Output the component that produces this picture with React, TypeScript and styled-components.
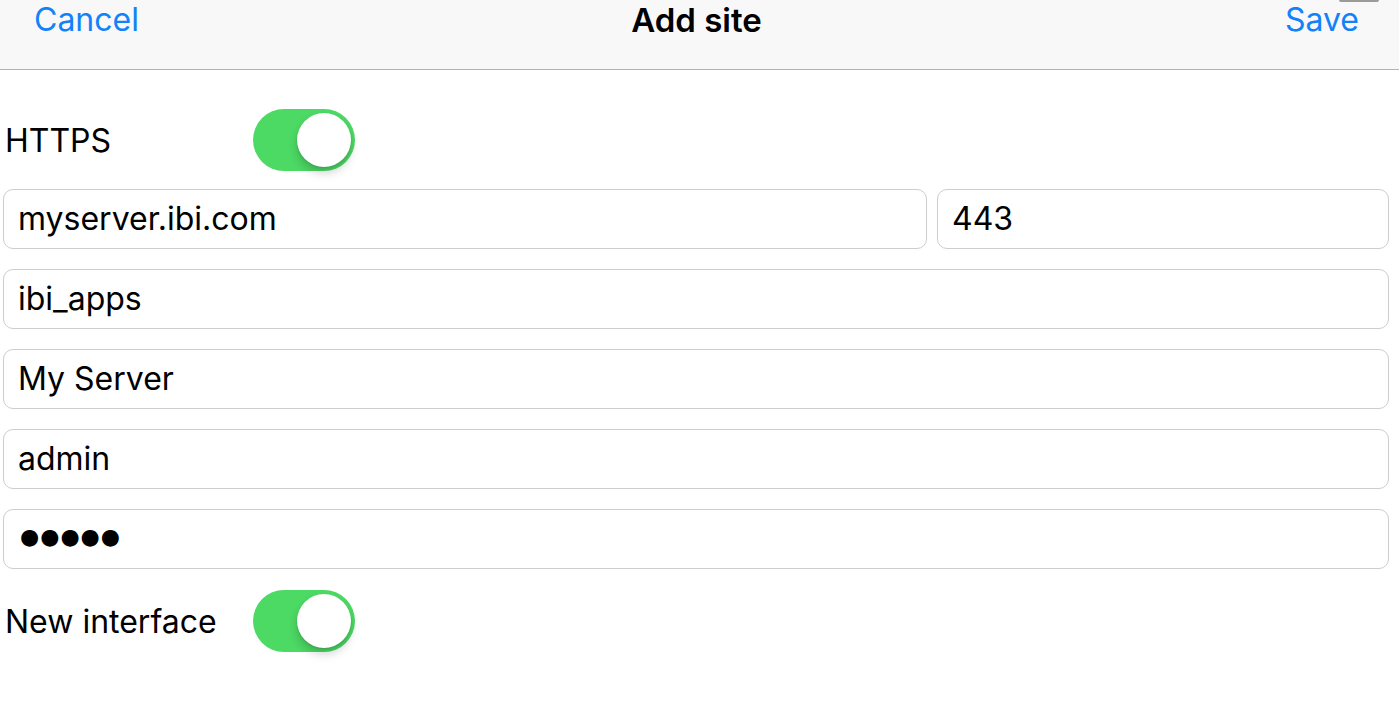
import React, {useState} from 'react';
import styled, {createGlobalStyle} from 'styled-components';

const GlobalStyle = createGlobalStyle`
  html, body {
    margin: 0;
    padding: 0;
    background: #ffffff;
    font-family: Inter, "Open Sans", "Liberation Sans", sans-serif;
    color: #000;
  }
`;

const Page = styled.div`
  position: relative;
  width: 1399px;
  height: 703px;
  overflow: hidden;
  background: #fff;
`;

const Header = styled.div`
  height: 69px;
  border-bottom: 1px solid #b3b3b3;
  background: #f8f8f8;
  display: grid;
  grid-template-columns: 1fr auto 1fr;
  align-items: start;
  padding: 0 40px 0 34px;
`;

const NavButton = styled.div<{ $right?: boolean }>`
  font-size: 32px;
  line-height: 40px;
  color: #1282fa;
  justify-self: ${p => (p.$right ? 'end' : 'start')};
  cursor: pointer;
`;

const Title = styled.div`
  font-size: 33px;
  line-height: 40px;
  font-weight: 600;
`;

const Grabber = styled.div`
  position: absolute;
  top: 0;
  right: 20px;
  width: 40px;
  height: 2px;
  border-radius: 0 0 2px 2px;
  background: #9a9a9a;
`;

const Form = styled.div`
  display: flex;
  flex-direction: column;
  gap: 20px;
  padding: 39px 10px 0 3px;
`;

const ToggleRow = styled.div<{ $shift: number }>`
  display: flex;
  align-items: center;
  height: 62px;
  margin: ${p => p.$shift}px 0 ${p => -2 - p.$shift}px 2px;
`;

const Label = styled.div`
  width: 248px;
  font-size: 32px;
`;

const Track = styled.div<{ $on: boolean }>`
  position: relative;
  width: 102px;
  height: 62px;
  border-radius: 31px;
  background: ${p => (p.$on ? '#4cd964' : '#e5e5e5')};
  cursor: pointer;
`;

const Knob = styled.div<{ $on: boolean }>`
  position: absolute;
  top: 4px;
  left: ${p => (p.$on ? '44px' : '4px')};
  width: 54px;
  height: 54px;
  border-radius: 50%;
  background: #fff;
  box-shadow: 0 6px 10px rgba(0, 0, 0, 0.18), 0 1px 2px rgba(0, 0, 0, 0.12);
`;

const FieldRow = styled.div`
  display: grid;
  grid-template-columns: 1fr 452px;
  gap: 10px;
`;

const Field = styled.input`
  box-sizing: border-box;
  width: 100%;
  height: 60px;
  border: 1px solid #cdcdcd;
  border-radius: 10px;
  padding: 0 14px 2px;
  font-family: Inter, "Open Sans", "Liberation Sans", sans-serif;
  font-size: 32px;
  color: #000;
  background: #fff;
  outline: none;
`;

const Masked = styled.div`
  box-sizing: border-box;
  height: 60px;
  border: 1px solid #cdcdcd;
  border-radius: 10px;
  padding: 0 16px 5px;
  display: flex;
  align-items: center;
  font-family: "DejaVu Sans", sans-serif;
  font-size: 22px;
  letter-spacing: 1px;
`;

function Toggle({on, onChange}: {on: boolean; onChange: () => void}) {
  return (
    <Track $on={on} onClick={onChange}>
      <Knob $on={on} />
    </Track>
  );
}

export default function App() {
  const [https, setHttps] = useState<boolean>(true);
  const [newUi, setNewUi] = useState<boolean>(true);

  return (
    <Page>
      <GlobalStyle />
      <Header>
        <NavButton>Cancel</NavButton>
        <Title>Add site</Title>
        <NavButton $right>Save</NavButton>
      </Header>
      <Grabber />
      <Form>
        <ToggleRow $shift={0}>
          <Label>HTTPS</Label>
          <Toggle on={https} onChange={() => setHttps(cur => !cur)} />
        </ToggleRow>
        <FieldRow>
          <Field defaultValue="myserver.ibi.com" />
          <Field defaultValue="443" />
        </FieldRow>
        <Field defaultValue="ibi_apps" />
        <Field defaultValue="My Server" />
        <Field defaultValue="admin" />
        <Masked>●●●●●</Masked>
        <ToggleRow $shift={1}>
          <Label>New interface</Label>
          <Toggle on={newUi} onChange={() => setNewUi(cur => !cur)} />
        </ToggleRow>
      </Form>
    </Page>
  );
}
